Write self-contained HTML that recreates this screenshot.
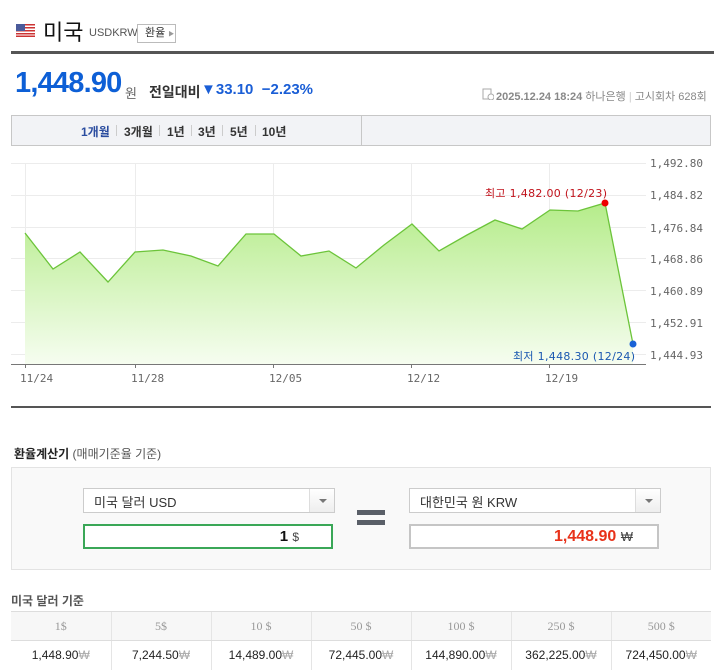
<!DOCTYPE html>
<html><head><meta charset="utf-8"><style>
*{margin:0;padding:0;box-sizing:border-box}
body{width:714px;height:668px;background:#fff;font-family:"Liberation Sans","Noto Sans CJK KR",sans-serif;position:relative;overflow:hidden;color:#333}
.a{position:absolute;white-space:nowrap}
.sel{position:absolute;height:25px;border:1px solid #ccc;background:#fff;font-size:13px;color:#333;padding:3px 0 0 10px}
.sel .ar{position:absolute;right:0;top:0;width:25px;height:23px;border-left:1px solid #ddd;background:linear-gradient(#fff,#eee)}
.sel .ar:after{content:"";position:absolute;left:9px;top:10px;border:4px solid transparent;border-top:4px solid #777;border-bottom:0}
table{position:absolute;left:11px;top:611px;width:700px;border-collapse:collapse;font-family:"Liberation Sans Narrow","Liberation Sans",sans-serif}
td{width:100px;text-align:center;font-size:12px;border-left:1px solid #e5e5e5}
td:first-child{border-left:0}
tr.h td{height:29px;background:#f7f7f7;color:#999;border-top:1px solid #ddd;border-bottom:1px solid #ddd;font-family:"Liberation Serif",serif}
tr.b td{height:29px;color:#222}
.w{color:#aaa}
.t{position:absolute;top:123px;font-size:12px;font-weight:bold;color:#333}
.s{position:absolute;top:125px;width:1px;height:11px;background:#ccc}
</style></head><body>
<svg class="a" style="left:16px;top:24px" width="19" height="13" viewBox="0 0 19 13"><rect width="19" height="13" fill="#fff"/><g fill="#c33"><rect y="0" width="19" height="1.5"/><rect y="3" width="19" height="1.5"/><rect y="6" width="19" height="1.5"/><rect y="9" width="19" height="1.5"/><rect y="11.5" width="19" height="1.5"/></g><rect width="9" height="7" fill="#4a5a9a"/></svg>
<div class="a" style="left:43px;top:15px;font-size:22px;color:#111">미국</div>
<div class="a" style="left:89px;top:27px;font-size:11px;color:#555">USDKRW</div>
<div class="a" style="left:137px;top:24px;width:39px;height:19px;border:1px solid #bbb;font-size:11px;padding:2px 0 0 7px;color:#333;line-height:13px">환율 <span style="font-size:6px;color:#999">▶</span></div>
<div class="a" style="left:11px;top:51px;width:703px;height:3px;background:#555"></div>
<div class="a" style="left:15px;top:67px;font-size:29px;font-weight:bold;color:#0d5fd6;letter-spacing:-0.8px">1,448.90</div>
<div class="a" style="left:125px;top:83px;font-size:13px;color:#666">원</div>
<div class="a" style="left:149px;top:82px;font-size:14px;font-weight:bold;color:#333">전일대비</div>
<div class="a" style="left:201px;top:81px;font-size:15px;font-weight:bold;color:#1a5ed6">▼33.10 &nbsp;−2.23%</div>
<svg class="a" style="left:482px;top:88px" width="12" height="12"><rect x="1" y="1" width="8" height="10" fill="none" stroke="#aaa"/><circle cx="9" cy="9" r="3" fill="#fff" stroke="#aaa"/></svg>
<div class="a" style="left:496px;top:88px;font-size:11px;color:#888"><b>2025.12.24 18:24</b> 하나은행 <span style="color:#ccc">|</span> 고시회차 628회</div>
<div class="a" style="left:11px;top:115px;width:700px;height:31px;background:#f2f3f6;border:1px solid #c7c7c7"></div>
<div class="a" style="left:361px;top:115px;width:1px;height:31px;background:#c7c7c7"></div>
<div class="t" style="left:81px;color:#2a4c9f">1개월</div><div class="s" style="left:116px"></div>
<div class="t" style="left:124px">3개월</div><div class="s" style="left:159px"></div>
<div class="t" style="left:167px">1년</div><div class="s" style="left:191px"></div>
<div class="t" style="left:198px">3년</div><div class="s" style="left:222px"></div>
<div class="t" style="left:230px">5년</div><div class="s" style="left:255px"></div>
<div class="t" style="left:262px">10년</div>
<svg class="a" style="left:0;top:150px" width="714" height="240" viewBox="0 150 714 240">
<defs><linearGradient id="g" x1="0" y1="0" x2="0" y2="1"><stop offset="0" stop-color="#b5ec8a"/><stop offset="1" stop-color="#f6fdf0"/></linearGradient></defs>
<g stroke="#ececec" stroke-width="1">
<line x1="11" y1="163.5" x2="646" y2="163.5"/><line x1="11" y1="195.5" x2="646" y2="195.5"/><line x1="11" y1="227.5" x2="646" y2="227.5"/><line x1="11" y1="258.5" x2="646" y2="258.5"/><line x1="11" y1="290.5" x2="646" y2="290.5"/><line x1="11" y1="322.5" x2="646" y2="322.5"/><line x1="11" y1="354.5" x2="646" y2="354.5"/>
<line x1="25.5" y1="163" x2="25.5" y2="364"/><line x1="135.5" y1="163" x2="135.5" y2="364"/><line x1="273.5" y1="163" x2="273.5" y2="364"/><line x1="411.5" y1="163" x2="411.5" y2="364"/><line x1="549.5" y1="163" x2="549.5" y2="364"/>
</g>
<path d="M25,233 L53,269 80,252 108,282 135,252 163,250 191,256 218,266 246,234 274,234 301,256 329,251 356,268 384,245 412,224 439,251 467,235 495,220 522,229 550,210 578,211 605,203 633,344 L633,364 L25,364Z" fill="url(#g)"/>
<path d="M25,233 L53,269 80,252 108,282 135,252 163,250 191,256 218,266 246,234 274,234 301,256 329,251 356,268 384,245 412,224 439,251 467,235 495,220 522,229 550,210 578,211 605,203 633,344" fill="none" stroke="#6cc43a" stroke-width="1.3"/>
<line x1="11" y1="364.5" x2="646" y2="364.5" stroke="#777"/>
<g stroke="#777"><line x1="25.5" y1="364" x2="25.5" y2="368"/><line x1="135.5" y1="364" x2="135.5" y2="368"/><line x1="273.5" y1="364" x2="273.5" y2="368"/><line x1="411.5" y1="364" x2="411.5" y2="368"/><line x1="549.5" y1="364" x2="549.5" y2="368"/></g>
<circle cx="605" cy="203" r="3.5" fill="#e00"/><circle cx="633" cy="344" r="3.5" fill="#1a62d6"/>
<g font-family="DejaVu Sans Mono,Liberation Mono,monospace" font-size="11" fill="#666">
<text x="650" y="167">1,492.80</text><text x="650" y="199">1,484.82</text><text x="650" y="232">1,476.84</text><text x="650" y="263">1,468.86</text><text x="650" y="295">1,460.89</text><text x="650" y="327">1,452.91</text><text x="650" y="359">1,444.93</text>
<text x="20" y="382">11/24</text><text x="131" y="382">11/28</text><text x="269" y="382">12/05</text><text x="407" y="382">12/12</text><text x="545" y="382">12/19</text>
<text x="485" y="197" fill="#c1121b" font-family="DejaVu Sans,Noto Sans CJK KR,sans-serif" font-size="11" textLength="122">최고 1,482.00 (12/23)</text>
<text x="513" y="360" fill="#1a58b0" font-family="DejaVu Sans,Noto Sans CJK KR,sans-serif" font-size="11" textLength="122">최저 1,448.30 (12/24)</text>
</g></svg>
<div class="a" style="left:11px;top:406px;width:700px;height:2px;background:#555"></div>
<div class="a" style="left:14px;top:445px;font-size:12px;color:#222"><b>환율계산기</b> <span style="color:#555">(매매기준율 기준)</span></div>
<div class="a" style="left:11px;top:467px;width:700px;height:103px;background:#f9f9f9;border:1px solid #e3e3e3"></div>
<div class="sel" style="left:83px;top:488px;width:252px">미국 달러 USD<div class="ar"></div></div>
<div class="sel" style="left:409px;top:488px;width:252px">대한민국 원 KRW<div class="ar"></div></div>
<div class="a" style="left:83px;top:524px;width:250px;height:25px;border:2px solid #3aa757;background:#fff;font-size:15px;font-weight:bold;color:#111;text-align:right;padding:2px 32px 0 0">1 <span style="font-size:12px;font-weight:normal;color:#444">$</span></div>
<div class="a" style="left:409px;top:524px;width:250px;height:25px;border:2px solid #c5c5c5;background:#fff;font-size:16px;font-weight:bold;color:#e8321a;text-align:right;padding:2px 24px 0 0">1,448.90 <span style="font-size:13px;font-weight:normal;color:#444">₩</span></div>
<div class="a" style="left:357px;top:510px;width:28px;height:5px;background:#5a5f68"></div>
<div class="a" style="left:357px;top:520px;width:28px;height:5px;background:#5a5f68"></div>
<div class="a" style="left:11px;top:592px;font-size:12px;font-weight:bold;color:#555">미국 달러 기준</div>
<table>
<tr class="h"><td>1$</td><td>5$</td><td>10 $</td><td>50 $</td><td>100 $</td><td>250 $</td><td>500 $</td></tr>
<tr class="b"><td>1,448.90<span class="w">₩</span></td><td>7,244.50<span class="w">₩</span></td><td>14,489.00<span class="w">₩</span></td><td>72,445.00<span class="w">₩</span></td><td>144,890.00<span class="w">₩</span></td><td>362,225.00<span class="w">₩</span></td><td>724,450.00<span class="w">₩</span></td></tr>
</table>
</body></html>
